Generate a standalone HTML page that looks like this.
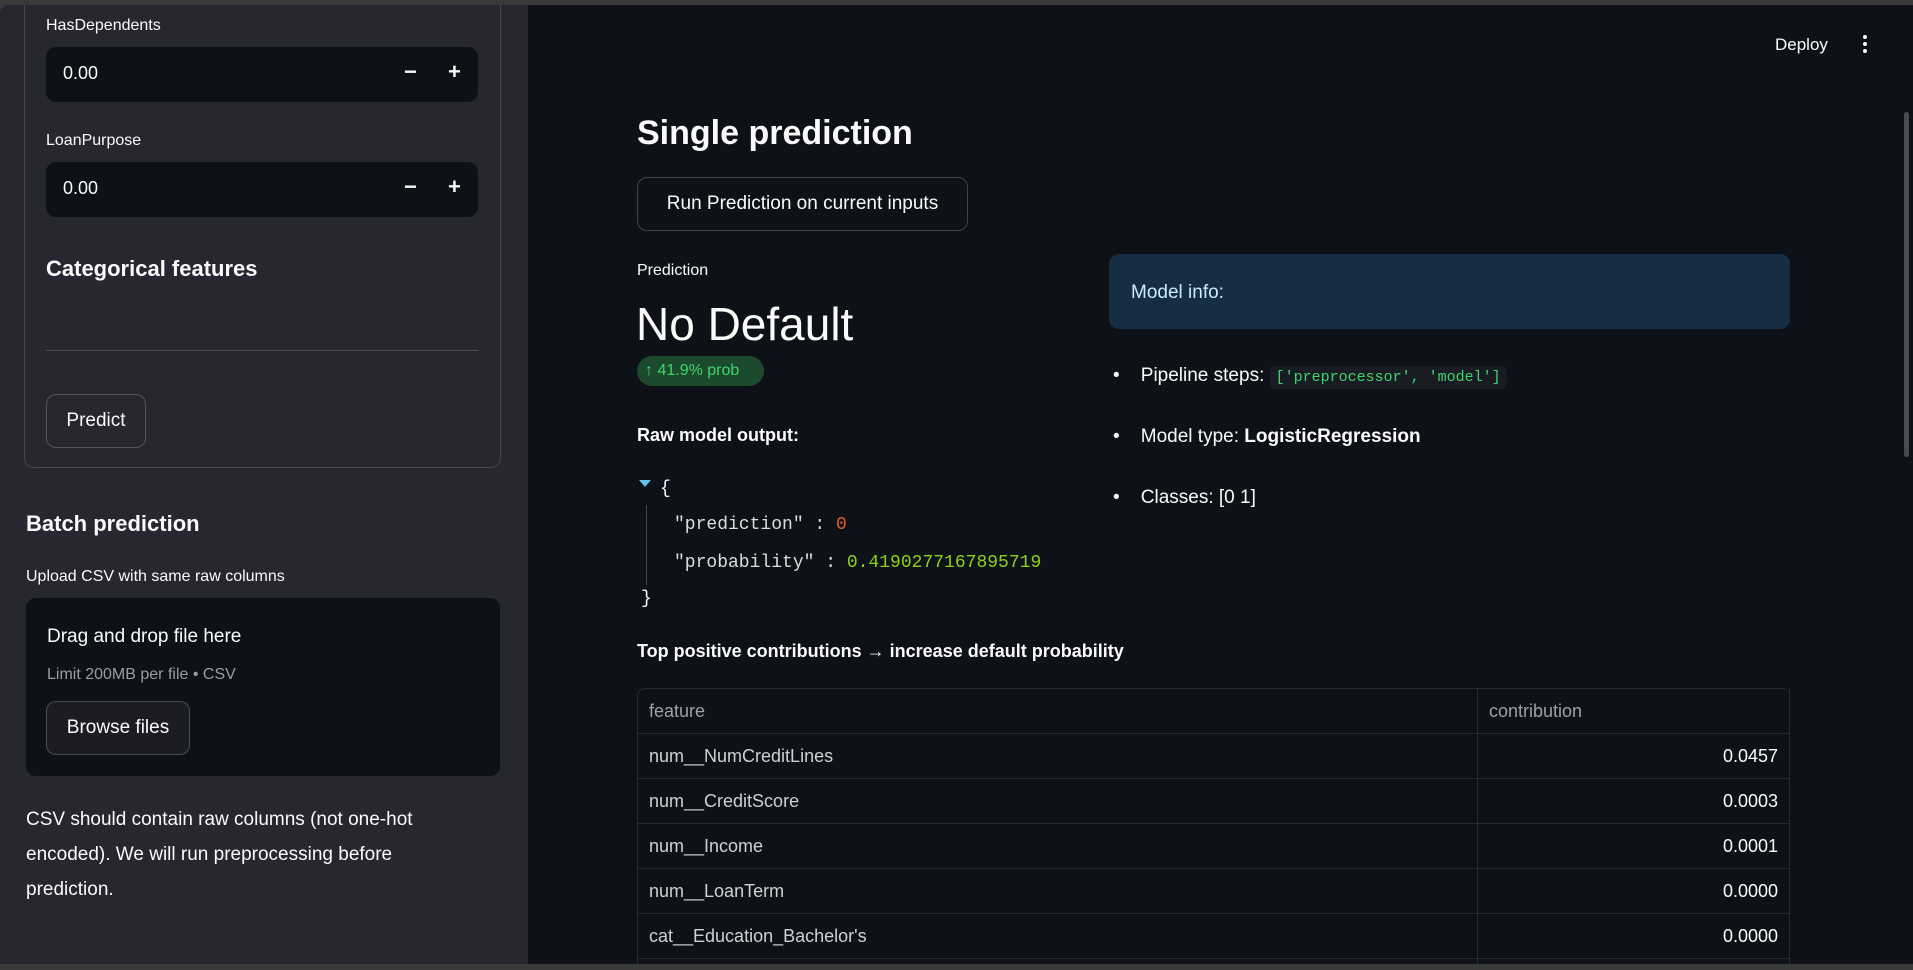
<!DOCTYPE html>
<html style="overflow:hidden;width:1913px;height:970px"><head><meta charset="utf-8"><style>
*{box-sizing:border-box;margin:0;padding:0}
body{width:1913px;height:970px;background:#3a3a3c;font-family:"Liberation Sans",sans-serif;color:#fafafa;position:relative;overflow:hidden}
.a{position:absolute;white-space:nowrap}
#sb{position:absolute;left:0;top:5px;width:528px;height:959px;background:#262730;border-radius:8px 0 0 0;overflow:hidden}
#main{position:absolute;left:528px;top:5px;width:1385px;height:959px;background:#0e1117;overflow:hidden}
.inp{position:absolute;left:46px;width:432px;height:55px;background:#0e1117;border-radius:10px}
.inp span{position:absolute;top:16px;font-size:18px}
.btn{position:absolute;border:1px solid rgba(250,250,250,0.22);border-radius:10px;font-size:19px;display:flex;align-items:center;justify-content:center}
.lbl{font-size:16px}
.mono{font-family:'Liberation Mono',monospace;font-size:18px}
td{border-right:1px solid #262a33;border-bottom:1px solid #262a33;height:45px;font-size:18px;padding:0 11px;color:#d0d0d4}
</style></head><body>
<div id="sb">
 <div style="position:absolute;left:24px;top:-20px;width:477px;height:483px;border:1px solid #45464f;border-radius:10px"></div>
 <div class="a lbl" style="left:46px;top:12px">HasDependents</div>
 <div class="inp" style="top:42px"><span style="left:17px">0.00</span><span style="left:358px;top:12px;font-size:22px;font-weight:bold">−</span><span style="left:402px;top:12px;font-size:22px;font-weight:bold">+</span></div>
 <div class="a lbl" style="left:46px;top:127px">LoanPurpose</div>
 <div class="inp" style="top:157px"><span style="left:17px">0.00</span><span style="left:358px;top:12px;font-size:22px;font-weight:bold">−</span><span style="left:402px;top:12px;font-size:22px;font-weight:bold">+</span></div>
 <div class="a" style="left:46px;top:251px;font-size:22px;font-weight:bold">Categorical features</div>
 <div class="a" style="left:46px;top:345px;width:432px;height:1px;background:#4a4b54"></div>
 <div class="btn" style="left:46px;top:389px;width:100px;height:54px">Predict</div>
 <div class="a" style="left:26px;top:506px;font-size:22px;font-weight:bold">Batch prediction</div>
 <div class="a lbl" style="left:26px;top:563px">Upload CSV with same raw columns</div>
 <div class="a" style="left:26px;top:593px;width:474px;height:178px;background:#0e1117;border-radius:10px"></div>
 <div class="a" style="left:47px;top:621px;font-size:19px">Drag and drop file here</div>
 <div class="a" style="left:47px;top:661px;font-size:16px;color:#9a9ca5">Limit 200MB per file • CSV</div>
 <div class="btn" style="left:46px;top:696px;width:144px;height:54px;background:#1b1c24">Browse files</div>
 <div class="a" style="left:26px;top:797px;font-size:19px;line-height:35px;white-space:normal;width:420px">CSV should contain raw columns (not one-hot encoded). We will run preprocessing before prediction.</div>
</div>
<div id="main">
 <div class="a" style="left:1247px;top:30px;font-size:17px">Deploy</div>
 <div class="a" style="left:1335px;top:30px;width:4px;height:4px;border-radius:2px;background:#fafafa;box-shadow:0 7px 0 #fafafa,0 14px 0 #fafafa"></div>
 <div class="a" style="left:1376px;top:107px;width:5px;height:345px;border-radius:3px;background:#4a4b52"></div>
 <div class="a" style="left:109px;top:109px;font-size:34px;font-weight:bold">Single prediction</div>
 <div class="btn" style="left:109px;top:172px;width:331px;height:54px">Run Prediction on current inputs</div>
 <div class="a lbl" style="left:109px;top:257px">Prediction</div>
 <div class="a" style="left:108px;top:292px;font-size:46px">No Default</div>
 <div class="a" style="left:109px;top:351px;width:127px;height:30px;border-radius:15px;background:#1b4a2d;color:#3dd56d;font-size:16px;line-height:30px;padding-left:8px">↑ 41.9% prob</div>
 <div class="a" style="left:109px;top:420px;font-size:18px;font-weight:bold">Raw model output:</div>
 <div class="a" style="left:111px;top:475px;width:0;height:0;border-left:6px solid transparent;border-right:6px solid transparent;border-top:7px solid #5bc6e8"></div>
 <div class="a mono" style="left:132px;top:474px">{</div>
 <div class="a" style="left:118px;top:500px;width:1px;height:80px;background:#444"></div>
 <div class="a mono" style="left:146px;top:510px;color:#ddd">"prediction" : <span style="color:#e0602b">0</span></div>
 <div class="a mono" style="left:146px;top:548px;color:#ddd">"probability" : <span style="color:#8cd219">0.4190277167895719</span></div>
 <div class="a mono" style="left:113px;top:584px">}</div>
 <div class="a" style="left:581px;top:249px;width:681px;height:75px;border-radius:10px;background:#172d43"></div>
 <div class="a" style="left:603px;top:277px;font-size:19px;color:#c7ebff">Model info:</div>
 <div class="a" style="left:585px;top:360px;font-size:19px">•&nbsp;&nbsp;&nbsp;&nbsp;Pipeline steps: <span style="font-family:'Liberation Mono',monospace;font-size:15px;color:#3dd56d;background:#1a1c23;padding:3px 6px;border-radius:5px">['preprocessor', 'model']</span></div>
 <div class="a" style="left:585px;top:421px;font-size:19px">•&nbsp;&nbsp;&nbsp;&nbsp;Model type: <b>LogisticRegression</b></div>
 <div class="a" style="left:585px;top:482px;font-size:19px">•&nbsp;&nbsp;&nbsp;&nbsp;Classes: [0 1]</div>
 <div class="a" style="left:109px;top:636px;font-size:18px;font-weight:bold">Top positive contributions → increase default probability</div>
 <table class="a" style="left:109px;top:683px;width:1153px;border-collapse:separate;border-spacing:0;border-top:1px solid #262a33;border-left:1px solid #262a33;border-radius:8px 8px 0 0">
  <tr><td style="width:840px;color:#9ea0a8">feature</td><td style="color:#9ea0a8">contribution</td></tr>
  <tr><td>num__NumCreditLines</td><td style="text-align:right;color:#fafafa">0.0457</td></tr>
  <tr><td>num__CreditScore</td><td style="text-align:right;color:#fafafa">0.0003</td></tr>
  <tr><td>num__Income</td><td style="text-align:right;color:#fafafa">0.0001</td></tr>
  <tr><td>num__LoanTerm</td><td style="text-align:right;color:#fafafa">0.0000</td></tr>
  <tr><td>cat__Education_Bachelor's</td><td style="text-align:right;color:#fafafa">0.0000</td></tr>
  <tr><td>&nbsp;</td><td></td></tr>
 </table>
</div>
</body></html>
